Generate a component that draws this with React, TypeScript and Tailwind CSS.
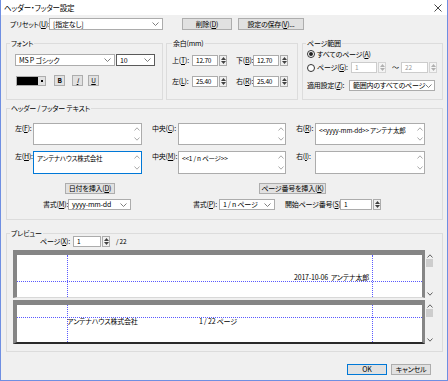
import React from "react";

const Chevron = () => (
  <svg width="7" height="4" viewBox="0 0 7 4" className="shrink-0">
    <path d="M0.5 0.5 L3.5 3.5 L6.5 0.5" fill="none" stroke="#707070" strokeWidth="0.9" />
  </svg>
);

const Up = ({ c = "#404040" }: { c?: string }) => (
  <svg width="5" height="3" viewBox="0 0 5 3">
    <path d="M0 3 L2.5 0 L5 3Z" fill={c} />
  </svg>
);
const Down = ({ c = "#404040" }: { c?: string }) => (
  <svg width="5" height="3" viewBox="0 0 5 3">
    <path d="M0 0 L2.5 3 L5 0Z" fill={c} />
  </svg>
);

const SmallUp = () => (
  <svg width="6" height="4" viewBox="0 0 6 4">
    <path d="M0.5 3.5 L3 0.8 L5.5 3.5" fill="none" stroke="#a0a0a0" strokeWidth="0.9" />
  </svg>
);
const SmallDown = () => (
  <svg width="6" height="4" viewBox="0 0 6 4">
    <path d="M0.5 0.5 L3 3.2 L5.5 0.5" fill="none" stroke="#a0a0a0" strokeWidth="0.9" />
  </svg>
);

function L({ w, className = "", children }: { w: string; className?: string; children: React.ReactNode }) {
  return <span className={`shrink-0 ${w} ${className}`}>{children}</span>;
}

function Select({ w, text, dark }: { w: string; text: string; dark?: boolean }) {
  return (
    <div
      className={`flex items-center justify-between bg-white border h-full pl-[3px] pr-[3px] shrink-0 ${w} ${
        dark ? "border-[#5a5a5a]" : "border-[#acacac]"
      }`}
    >
      <span>{text}</span>
      <Chevron />
    </div>
  );
}

function Btn({ w, children, focus }: { w: string; children: React.ReactNode; focus?: boolean }) {
  return (
    <div
      className={`flex items-center justify-center h-full bg-[#e1e1e1] border shrink-0 ${w} ${
        focus ? "border-[#0078d7]" : "border-[#adadad]"
      }`}
    >
      {children}
    </div>
  );
}

function Input({ w, text, disabled }: { w: string; text: string; disabled?: boolean }) {
  return (
    <div
      className={`flex items-center h-full border pl-[3px] text-[6.5px] shrink-0 ${w} ${
        disabled ? "bg-white border-[#cccccc] text-[#9a9a9a]" : "bg-white border-[#acacac]"
      }`}
    >
      {text}
    </div>
  );
}

function Spin({ disabled }: { disabled?: boolean }) {
  const c = disabled ? "#b0b0b0" : "#404040";
  return (
    <div
      className={`flex flex-col w-[8px] h-full border ml-[1px] shrink-0 ${
        disabled ? "border-[#d4d4d4] bg-[#f4f4f4]" : "border-[#acacac] bg-[#f0f0f0]"
      }`}
    >
      <div className="flex-1 flex items-center justify-center">
        <Up c={c} />
      </div>
      <div className="flex-1 flex items-center justify-center">
        <Down c={c} />
      </div>
    </div>
  );
}

function TA({ w, h, text, focus }: { w: string; h: string; text?: string; focus?: boolean }) {
  return (
    <div
      className={`flex bg-white border shrink-0 ${w} ${h} ${focus ? "border-[#0078d7]" : "border-[#acacac]"}`}
    >
      <div className="flex-1 pl-[3px] pt-[3px] text-[6.5px]">{text}</div>
      <div className="w-[9px] flex flex-col justify-between items-center py-[3px]">
        <SmallUp />
        <SmallDown />
      </div>
    </div>
  );
}

function Radio({ on }: { on?: boolean }) {
  return (
    <div className="w-[8px] h-[8px] rounded-full border border-[#333333] bg-white flex items-center justify-center shrink-0">
      {on && <div className="w-[4px] h-[4px] rounded-full bg-[#222222]" />}
    </div>
  );
}

function Scrollbar({ thumbTop }: { thumbTop: string }) {
  return (
    <div className="w-[9px] h-full bg-[#f0f0f0] flex flex-col items-center">
      <div className="mt-[3px] h-[5px] flex items-center">
        <svg width="6" height="4" viewBox="0 0 6 4">
          <path d="M0.5 3.5 L3 0.8 L5.5 3.5" fill="none" stroke="#505050" strokeWidth="0.9" />
        </svg>
      </div>
      <div className={`w-[7px] h-[8px] bg-[#cdcdcd] ${thumbTop}`} />
      <div className="flex-1" />
      <div className="mb-[2px] h-[5px] flex items-center">
        <svg width="6" height="4" viewBox="0 0 6 4">
          <path d="M0.5 0.5 L3 3.2 L5.5 0.5" fill="none" stroke="#505050" strokeWidth="0.9" />
        </svg>
      </div>
    </div>
  );
}

export default function App() {
  return (
    <div className="w-[448px] h-[381px] bg-[#f0f0f0] border-x border-b border-[#6f8fe2] flex flex-col text-[7px] leading-none tracking-[-0.2px] text-black whitespace-nowrap [font-feature-settings:'palt'] font-['Noto_Sans_CJK_JP','Noto_Sans',sans-serif] overflow-hidden">
      {/* title bar */}
      <div className="h-[15px] bg-white flex items-center justify-between pl-[3px] pr-[5px] shrink-0">
        <span className="text-[7.5px]">ヘッダー・フッター設定</span>
        <svg width="8" height="8" viewBox="0 0 8 8">
          <path d="M0.5 0.5 L7.5 7.5 M7.5 0.5 L0.5 7.5" stroke="#333333" strokeWidth="0.9" />
        </svg>
      </div>

      {/* preset row */}
      <div className="mt-[3px] h-[12px] flex items-center pl-[9px] shrink-0">
        <L w="w-[39px]">プリセット(<u>U</u>):</L>
        <Select w="w-[114px]" text="[指定なし]" />
        <div className="ml-[19px] h-full">
          <Btn w="w-[50px]">削除(<u>D</u>)</Btn>
        </div>
        <div className="ml-[6px] h-full">
          <Btn w="w-[66px]">設定の保存(<u>V</u>)...</Btn>
        </div>
      </div>

      {/* groups row */}
      <div className="mt-[8px] flex shrink-0">
        <fieldset className="ml-[5px] w-[157px] h-[62px] border border-[#dcdcdc]">
          <legend className="ml-[3px] px-[1px] h-[10px] leading-[10px]">フォント</legend>
          <div className="pl-[8px]">
            <div className="mt-[6px] h-[12px] flex">
              <Select w="w-[100px]" text="MS P ゴシック" />
              <div className="ml-[1px] h-full">
                <Select w="w-[39px]" text="10" dark />
              </div>
            </div>
            <div className="mt-[9px] h-[11px] flex items-center">
              <div className="ml-[1px] w-[30px] h-[10px] flex items-center border border-[#adadad] bg-[#e1e1e1]">
                <div className="w-[21px] h-full bg-black" />
                <div className="flex-1 flex items-center justify-center">
                  <div className="w-[2px] h-[2px] bg-black" />
                </div>
              </div>
              <div className="ml-[8px] h-full">
                <Btn w="w-[11px]">
                  <span className="font-bold text-[6.5px]">B</span>
                </Btn>
              </div>
              <div className="ml-[7px] h-full">
                <Btn w="w-[11px]">
                  <span className="italic text-[6.5px] underline">I</span>
                </Btn>
              </div>
              <div className="ml-[5px] h-full">
                <Btn w="w-[11px]">
                  <span className="underline text-[6.5px]">U</span>
                </Btn>
              </div>
            </div>
          </div>
        </fieldset>

        <fieldset className="ml-[3px] w-[132px] h-[62px] border border-[#dcdcdc]">
          <legend className="ml-[5px] px-[1px] h-[10px] leading-[10px]">余白(mm)</legend>
          <div className="pl-[5px]">
            <div className="mt-[7px] h-[11px] flex items-center">
              <L w="w-[20px]">上(<u>T</u>):</L>
              <Input w="w-[26px]" text="12.70" />
              <Spin />
              <L w="w-[17px]" className="ml-[9px]">下(<u>B</u>):</L>
              <Input w="w-[26px]" text="12.70" />
              <Spin />
            </div>
            <div className="mt-[10px] h-[11px] flex items-center">
              <L w="w-[20px]">左(<u>L</u>):</L>
              <Input w="w-[26px]" text="25.40" />
              <Spin />
              <L w="w-[17px]" className="ml-[9px]">右(<u>R</u>):</L>
              <Input w="w-[26px]" text="25.40" />
              <Spin />
            </div>
          </div>
        </fieldset>

        <fieldset className="ml-[4px] w-[141px] h-[62px] border border-[#dcdcdc]">
          <legend className="ml-[3px] px-[1px] h-[10px] leading-[10px]">ページ範囲</legend>
          <div className="pl-[4px]">
            <div className="mt-[1px] h-[10px] flex items-center">
              <Radio on />
              <span className="ml-[2px]">すべてのページ(<u>A</u>)</span>
            </div>
            <div className="mt-[3px] h-[11px] flex items-center">
              <Radio />
              <L w="w-[34px]" className="ml-[2px]">ページ(<u>G</u>):</L>
              <Input w="w-[26px]" text="1" disabled />
              <Spin disabled />
              <L w="w-[8px]" className="ml-[6px]">～</L>
              <div className="ml-[1px] h-full flex">
                <Input w="w-[27px]" text="22" disabled />
                <Spin disabled />
              </div>
            </div>
            <div className="mt-[7px] h-[11px] flex items-center">
              <L w="w-[42px]">適用設定(<u>Z</u>):</L>
              <Select w="w-[86px]" text="範囲内のすべてのページ" />
            </div>
          </div>
        </fieldset>
      </div>

      {/* header / footer text */}
      <fieldset className="mt-[3px] ml-[5px] w-[437px] h-[117px] border border-[#dcdcdc] shrink-0">
        <legend className="ml-[3px] px-[1px] h-[10px] leading-[10px]">ヘッダー / フッター テキスト</legend>
        <div className="pl-[8px]">
          <div className="mt-[10px] flex items-start">
            <L w="w-[18px]" className="mt-[2px]">左(<u>F</u>):</L>
            <TA w="w-[109px]" h="h-[22px]" />
            <L w="w-[26px]" className="ml-[10px] mt-[2px]">中央(<u>C</u>):</L>
            <TA w="w-[108px]" h="h-[22px]" />
            <L w="w-[19px]" className="ml-[10px] mt-[2px]">右(<u>R</u>):</L>
            <TA w="w-[110px]" h="h-[22px]" text="<<yyyy-mm-dd>>  アンテナ太郎" />
          </div>
          <div className="mt-[6px] flex items-start">
            <L w="w-[18px]" className="mt-[2px]">左(<u>H</u>):</L>
            <TA w="w-[109px]" h="h-[23px]" text="アンテナハウス株式会社" focus />
            <L w="w-[26px]" className="ml-[10px] mt-[2px]">中央(<u>M</u>):</L>
            <TA w="w-[108px]" h="h-[23px]" text="<<1 / n ページ>>" />
            <L w="w-[19px]" className="ml-[10px] mt-[2px]">右(<u>I</u>):</L>
            <TA w="w-[110px]" h="h-[23px]" />
          </div>
          <div className="mt-[9px] h-[11px] flex">
            <div className="ml-[50px] h-full">
              <Btn w="w-[50px]">日付を挿入(<u>D</u>)</Btn>
            </div>
            <div className="ml-[144px] h-full">
              <Btn w="w-[67px]">ページ番号を挿入(<u>K</u>)</Btn>
            </div>
          </div>
          <div className="mt-[5px] h-[11px] flex items-center">
            <L w="w-[25px]" className="ml-[28px]">書式(<u>M</u>):</L>
            <Select w="w-[63px]" text="yyyy-mm-dd" />
            <L w="w-[26px]" className="ml-[62px]">書式(<u>P</u>):</L>
            <Select w="w-[56px]" text="1 / n ページ" />
            <L w="w-[55px]" className="ml-[10px]">開始ページ番号(<u>S</u>):</L>
            <Input w="w-[32px]" text="1" />
            <Spin />
          </div>
        </div>
      </fieldset>

      {/* preview */}
      <fieldset className="mt-[8px] ml-[5px] w-[437px] h-[124px] border border-[#dcdcdc] shrink-0">
        <legend className="ml-[3px] px-[1px] h-[10px] leading-[10px]">プレビュー</legend>
        <div>
          <div className="-mt-[2px] h-[11px] flex items-center pl-[33px]">
            <L w="w-[33px]">ページ(<u>X</u>):</L>
            <Input w="w-[28px]" text="1" />
            <Spin />
            <span className="ml-[6px] text-[6.5px]">/ 22</span>
          </div>

          <div className="mt-[3px] ml-[6px] flex h-[48px]">
            <div className="relative w-[412px] h-full bg-white border-t-[5px] border-l-[4px] border-r-[3px] border-b border-t-[#858585] border-l-[#858585] border-r-[#858585] border-b-[#d8d8d8]">
              <div className="absolute left-0 right-0 top-[26px] border-t border-dotted border-[#5a5aff]" />
              <div className="absolute top-0 bottom-0 left-[50px] border-l border-dotted border-[#5a5aff]" />
              <div className="absolute top-0 bottom-0 left-[355px] border-l border-dotted border-[#5a5aff]" />
              <div className="absolute top-[19px] right-[53px] text-[7px]">2017-10-06&nbsp;&nbsp;アンテナ太郎</div>
            </div>
            <Scrollbar thumbTop="mt-[1px]" />
          </div>

          <div className="mt-[2px] ml-[6px] flex h-[44px]">
            <div className="relative w-[412px] h-full bg-white border-t-[5px] border-l-[4px] border-r-[3px] border-b-2 border-t-[#858585] border-l-[#858585] border-r-[#858585] border-b-[#2a2a2a]">
              <div className="absolute left-0 right-0 top-[12px] border-t border-dotted border-[#5a5aff]" />
              <div className="absolute top-0 bottom-0 left-[50px] border-l border-dotted border-[#5a5aff]" />
              <div className="absolute top-0 bottom-0 left-[355px] border-l border-dotted border-[#5a5aff]" />
              <div className="absolute top-[13px] left-[50px] text-[7px]">アンテナハウス株式会社</div>
              <div className="absolute top-[13px] left-[182px] text-[7px]">1 / 22 ページ</div>
            </div>
            <Scrollbar thumbTop="mt-[1px]" />
          </div>
        </div>
      </fieldset>

      {/* bottom buttons */}
      <div className="mt-[12px] h-[11px] flex justify-end pr-[16px] shrink-0">
        <Btn w="w-[40px]" focus>OK</Btn>
        <div className="ml-[4px] h-full">
          <Btn w="w-[40px]">キャンセル</Btn>
        </div>
      </div>
    </div>
  );
}
